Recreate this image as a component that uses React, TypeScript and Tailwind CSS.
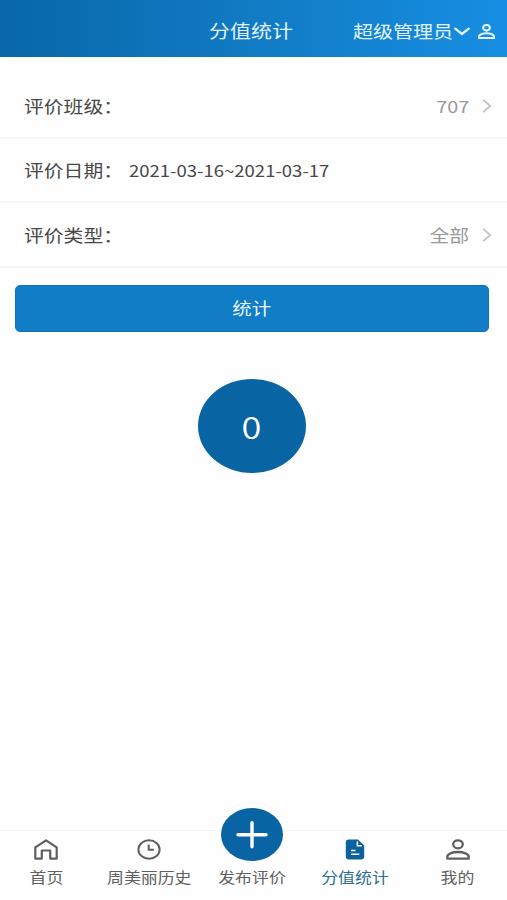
import type { ReactNode } from "react";

function Wide({ children, className = "" }: { children: ReactNode; className?: string }) {
  return (
    <span className={`inline-block scale-x-[1.165] whitespace-nowrap ${className}`}>{children}</span>
  );
}

function PersonIcon({ className = "", stroke = 2.3 }: { className?: string; stroke?: number }) {
  return (
    <svg viewBox="0 0 24 21" preserveAspectRatio="none" fill="none" stroke="currentColor" strokeWidth={stroke} strokeLinejoin="round" className={className}>
      <ellipse cx="12" cy="5.3" rx="4.8" ry="4" />
      <path d="M1.3 19.7V17.7C1.3 15 6.2 13 12 13S22.7 15 22.7 17.7V19.7Z" />
    </svg>
  );
}

function Chevron() {
  return (
    <svg viewBox="0 0 10 14" fill="none" stroke="#c2c2c2" strokeWidth="1.8" className="mt-[2px] h-[14px] w-[10px]">
      <path d="M1.2 .8L8.2 7L1.2 13.2" />
    </svg>
  );
}

function Row({ label, date, value }: { label: string; date?: string; value?: string }) {
  return (
    <div className="flex h-[64.5px] items-center border-b-2 border-[#f4f4f4] pr-[15px] pl-6 text-[17px] text-[#484848]">
      <Wide className="w-[90px] origin-left">{label}</Wide>
      {date && <Wide className="mt-[2px] ml-[15px] origin-left text-[15.9px]">{date}</Wide>}
      {value && (
        <div className="ml-auto flex items-center gap-[13px] text-[#999]">
          <Wide className="origin-right">{value}</Wide>
          <Chevron />
        </div>
      )}
    </div>
  );
}

function Tab({ label, active, children }: { label: string; active?: boolean; children: ReactNode }) {
  return (
    <div className={`flex flex-1 flex-col items-center ${active ? "text-[#0a629f]" : "text-[#606060]"}`}>
      <div className="flex h-[36px] w-full items-center justify-center">{children}</div>
      <Wide className={`text-[14.5px] leading-[20px] ${active ? "text-[#2c6f8f]" : ""}`}>{label}</Wide>
    </div>
  );
}

export default function App() {
  return (
    <div className="flex h-[900px] w-[507px] flex-col overflow-hidden bg-[#fefefe] font-['Noto_Sans_CJK_SC',sans-serif]">
      <header className="grid h-[57px] shrink-0 grid-cols-[209px_84px_1fr] items-center bg-linear-to-r from-[#0967a9] via-[#117bc4] to-[#178ee3] pt-[4px] text-[#e2f3fc]">
        <span />
        <Wide className="origin-left text-[18px]">分值统计</Wide>
        <div className="flex items-center pr-3 pl-[60px]">
          <Wide className="w-[101px] shrink-0 origin-left text-[17.2px]">超级管理员</Wide>
          <svg viewBox="0 0 16 9" fill="none" stroke="currentColor" strokeWidth="2.3" strokeLinecap="round" className="mt-[3px] h-[9px] w-[16px] shrink-0">
            <path d="M1.2 1.6L8 7L14.8 1.6" />
          </svg>
          <PersonIcon stroke={2.9} className="mt-[2px] ml-[8px] h-[15px] w-[17px] shrink-0" />
        </div>
      </header>

      <main className="flex flex-1 flex-col pt-[17px]">
        <Row label="评价班级：" value="707" />
        <Row label="评价日期：" date="2021-03-16~2021-03-17" />
        <Row label="评价类型：" value="全部" />
        <button className="mt-[17px] mr-[18px] ml-[15px] h-[47px] rounded-[5px] border border-[#1274b5] bg-[#107dc6] pt-[2px] text-[16.7px] text-[#e8f6fd]">
          <Wide>统计</Wide>
        </button>
        <div className="mt-[47px] ml-[198px] flex h-[94px] w-[108px] items-center justify-center rounded-[50%] bg-[#0964a3] pt-[2px] text-[31px] font-[350] text-white">
          <Wide>0</Wide>
        </div>
      </main>

      <nav className="-ml-[5px] flex h-[70px] w-[514px] shrink-0 border-t border-[#f2f2f2]">
        <Tab label="首页">
          <svg viewBox="0 0 24 21" fill="none" stroke="currentColor" strokeWidth="2.2" strokeLinejoin="round" className="h-[21px] w-[24px]">
            <path d="M1.3 19.6V8.4L12 1.3L22.7 8.4V19.6H16.2V11.5H7.8V19.6Z" />
          </svg>
        </Tab>
        <Tab label="周美丽历史">
          <svg viewBox="0 0 24 21" fill="none" stroke="currentColor" strokeWidth="2" className="h-[21px] w-[24px]">
            <ellipse cx="12" cy="10.5" rx="10.6" ry="9.3" />
            <path d="M11.7 5.5V10.8H17" />
          </svg>
        </Tab>
        <Tab label="发布评价">
          <div className="relative h-full w-full">
            <div className="absolute -top-[29px] left-1/2 h-[66px] w-[76px] -translate-x-1/2 rounded-[50%] border-t border-[#f6f6f6] bg-[#fefefe]" />
            <div className="absolute -top-[23px] left-1/2 flex h-[53px] w-[62px] -translate-x-1/2 items-center justify-center rounded-[50%] bg-[#0964a3]">
              <svg viewBox="0 0 32 28" stroke="white" strokeWidth="3.4" strokeLinecap="round" className="h-[28px] w-[32px]">
                <path d="M2 13.7H30M16 1.7V25.7" />
              </svg>
            </div>
          </div>
        </Tab>
        <Tab label="分值统计" active>
          <svg viewBox="0 0 20 21" className="h-[21px] w-[20px]">
            <path fill="currentColor" d="M3.5 .5H13L19.2 6.5V17.5Q19.2 20.5 16 20.5H3.8Q.8 20.5 .8 17.5V3.5Q.8 .5 3.5 .5Z" />
            <path d="M12.4 2.6V6.7H17M6 11.5H10.5M6 15.3H14.3" fill="none" stroke="white" strokeWidth="1.5" />
          </svg>
        </Tab>
        <Tab label="我的">
          <PersonIcon className="h-[21px] w-[24px]" />
        </Tab>
      </nav>
    </div>
  );
}
